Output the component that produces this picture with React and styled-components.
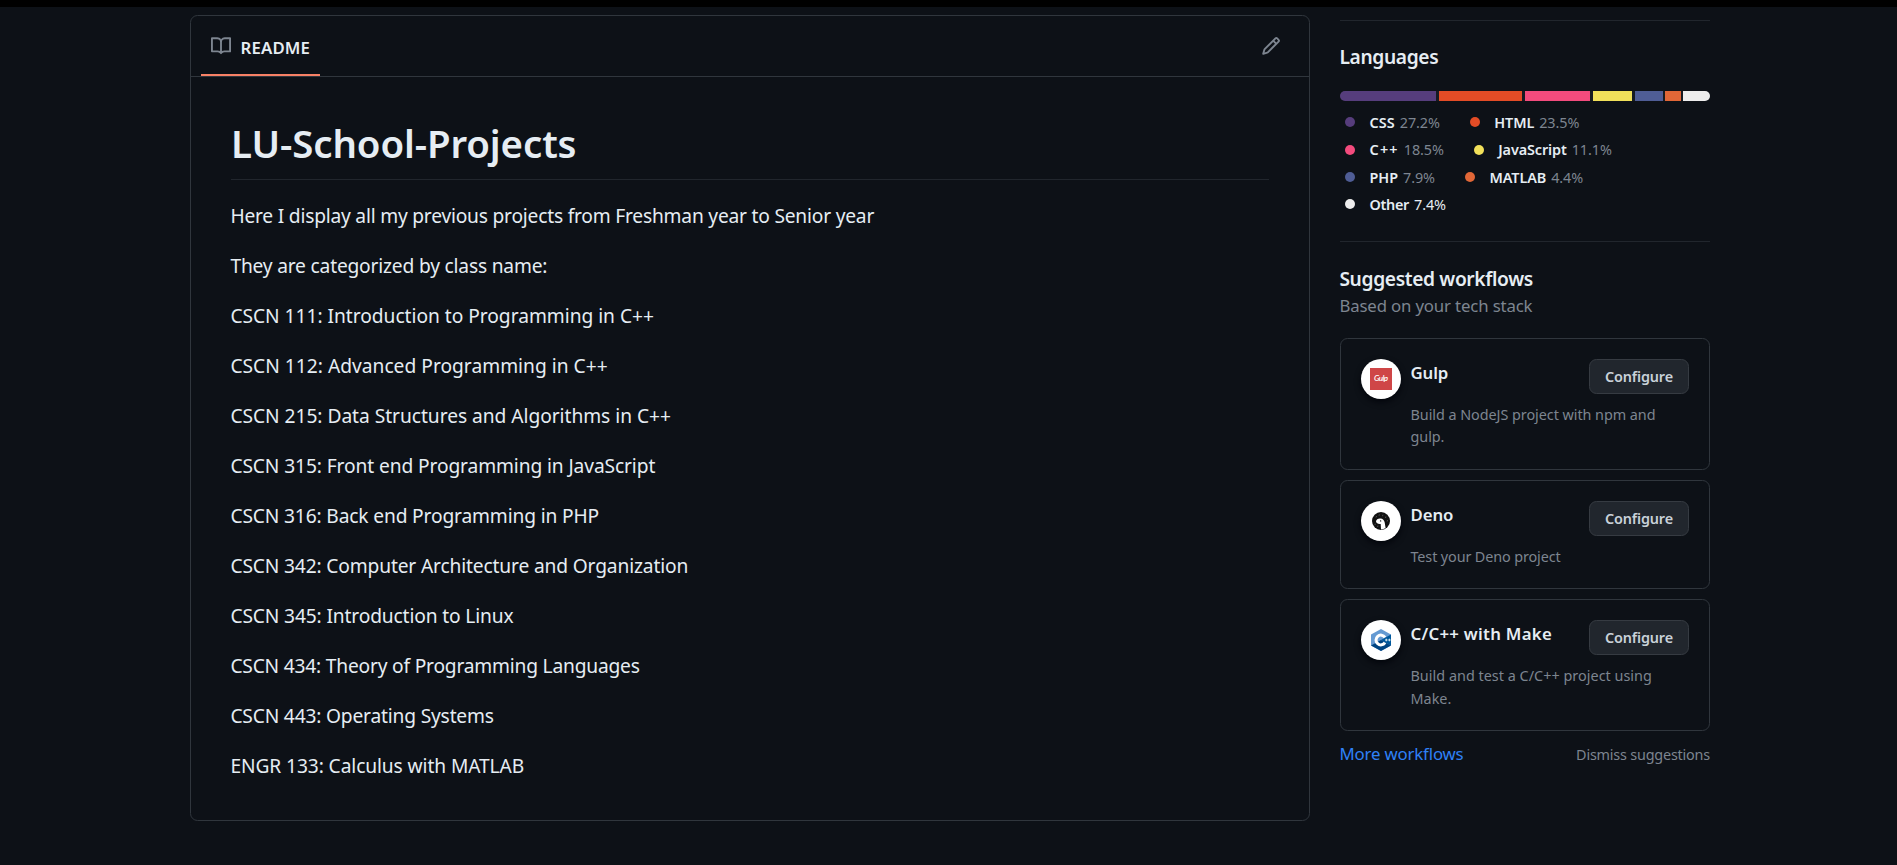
import React from "react";
import styled, { createGlobalStyle } from "styled-components";

const GlobalStyle = createGlobalStyle`
  * { box-sizing: border-box; }
  body {
    margin: 0;
    background: #0d1117;
    color: #e6edf3;
    font-family: "Noto Sans", "Open Sans", sans-serif;
    overflow: hidden;
  }
`;

const Page = styled.div`
  height: 865px;
  border-top: 7px solid #000;
  background: #0d1117;
  overflow: hidden;
`;

const Layout = styled.main`
  display: grid;
  grid-template-columns: 1120px 370px;
  column-gap: 30px;
  align-items: start;
  padding-left: 190px;
`;

const ReadmeCard = styled.section`
  margin-top: 8px;
  border: 1px solid #30363d;
  border-radius: 7.5px;
`;

const ReadmeHeader = styled.header`
  display: flex;
  justify-content: space-between;
  height: 61px;
  padding: 0 28px 0 10px;
  border-bottom: 1px solid #30363d;
`;

const Tab = styled.div`
  display: flex;
  gap: 9.5px;
  width: 119px;
  padding: 20px 0 0 10px;
  border-bottom: 2px solid #f78166;
  color: #7d8590;
`;

const TabLabel = styled.span`
  margin-top: 2px;
  font-size: 16.8px;
  line-height: 20px;
  font-weight: 600;
  letter-spacing: 0.15px;
  color: #e6edf3;
`;

const EditButton = styled.button`
  align-self: flex-start;
  display: flex;
  margin-top: 20px;
  padding: 0;
  border: 0;
  background: none;
  color: #7d8590;
`;

const ReadmeBody = styled.article`
  padding: 40px;
`;

const Title = styled.h1`
  margin: 0 0 20px;
  padding: 1px 0 11px;
  border-bottom: 1px solid #21262d;
  font-size: 38.4px;
  line-height: 50px;
  font-weight: 600;
  letter-spacing: -0.1px;
`;

const Paragraph = styled.p`
  margin: 0 0 20px;
  padding-top: 2px;
  font-size: 19.2px;
  line-height: 28px;
  text-indent: -0.6px;
  letter-spacing: ${(p) => p.$tracking}px;
  &:last-child { margin-bottom: 0; }
`;

const Sidebar = styled.aside`
  padding-top: 13px;
`;

const Panel = styled.section`
  height: ${(p) => p.$height || "auto"};
  border-top: 1px solid #21262d;
`;

const PanelTitle = styled.h2`
  margin: 0;
  padding-top: ${(p) => p.$top}px;
  font-size: 19.2px;
  line-height: 25px;
  font-weight: 600;
  text-indent: -0.6px;
  letter-spacing: -0.36px;
`;

const LanguageBar = styled.div`
  display: flex;
  height: 10px;
  margin-top: 22px;
  border-radius: 7.5px;
  overflow: hidden;
  background: #161b22;
`;

const Segment = styled.span`
  width: ${(p) => p.$width}px;
  margin-right: ${(p) => p.$gap}px;
  background: ${(p) => p.$color};
`;

const LanguageList = styled.div`
  display: grid;
  grid-auto-rows: 27.4px;
  margin-top: 10px;
`;

const LanguageRow = styled.div`
  display: flex;
  gap: 25px;
`;

const Language = styled.div`
  display: flex;
  align-items: center;
  height: 22.5px;
  font-size: 14.4px;
  white-space: nowrap;
`;

const Dot = styled.span`
  width: 10px;
  height: 10px;
  margin: 0 14.5px 0 5px;
  border-radius: 50%;
  background: ${(p) => p.$color};
`;

const LanguageName = styled.span`
  margin-right: 5px;
  font-weight: 600;
  letter-spacing: ${(p) => p.$tracking ?? -0.1}px;
`;

const Percent = styled.span`
  color: ${(p) => (p.$bright ? "#e6edf3" : "#7d8590")};
  letter-spacing: -0.1px;
`;

const Subtitle = styled.p`
  margin: 2px 0 18.6px;
  font-size: 16.8px;
  line-height: 26px;
  text-indent: -0.6px;
  letter-spacing: -0.15px;
  color: #7d8590;
`;

const Workflow = styled.div`
  display: flex;
  align-items: flex-start;
  margin-bottom: 10px;
  padding: 20px;
  border: 1px solid #30363d;
  border-radius: 7.5px;
`;

const Avatar = styled.div`
  flex: none;
  display: grid;
  place-items: center;
  width: 40px;
  height: 40px;
  margin-right: 9.5px;
  border-radius: 50%;
  background: #fff;
  box-shadow: 0 3px 6px rgba(1, 4, 9, 0.85);
`;

const WorkflowContent = styled.div`
  flex: 1;
`;

const WorkflowTop = styled.div`
  display: flex;
  justify-content: space-between;
  height: 35px;
`;

const WorkflowName = styled.h3`
  margin: 0;
  padding-top: 1px;
  font-size: 16.8px;
  line-height: 26px;
  font-weight: 600;
  letter-spacing: ${(p) => p.$tracking}px;
`;

const ConfigureButton = styled.button`
  width: 100px;
  height: 35px;
  padding: 0;
  border: 1px solid #363b42;
  border-radius: 7.5px;
  background: #21262d;
  color: #c9d1d9;
  font-family: inherit;
  font-size: 14.4px;
  font-weight: 600;
  letter-spacing: -0.15px;
`;

const Description = styled.p`
  margin: 10px 0 0;
  width: 257px;
  font-size: 14.4px;
  line-height: 22.5px;
  letter-spacing: ${(p) => p.$tracking}px;
  color: #7d8590;
`;

const Footer = styled.div`
  display: flex;
  justify-content: space-between;
  align-items: baseline;
`;

const MoreLink = styled.a`
  font-size: 16.8px;
  line-height: 26px;
  text-indent: -0.6px;
  letter-spacing: -0.15px;
  color: #2f81f7;
`;

const Dismiss = styled.span`
  font-size: 14.4px;
  letter-spacing: -0.2px;
  color: #7d8590;
`;

const BookIcon = () => (
  <svg width="20" height="20" viewBox="0 0 16 16" fill="currentColor">
    <path d="M0 1.75A.75.75 0 0 1 .75 1h4.253c1.227 0 2.317.59 3 1.501A3.743 3.743 0 0 1 11.006 1h4.245a.75.75 0 0 1 .75.75v10.5a.75.75 0 0 1-.75.75h-4.507a2.25 2.25 0 0 0-1.591.659l-.622.621a.75.75 0 0 1-1.06 0l-.622-.621A2.25 2.25 0 0 0 5.258 13H.75a.75.75 0 0 1-.75-.75Zm7.251 10.324.004-5.073-.002-2.253A2.25 2.25 0 0 0 5.003 2.5H1.5v9h3.757a3.75 3.75 0 0 1 1.994.574ZM8.755 4.75l-.004 7.322a3.752 3.752 0 0 1 1.992-.572H14.5v-9h-3.495a2.25 2.25 0 0 0-2.25 2.25Z" />
  </svg>
);

const PencilIcon = () => (
  <svg width="20" height="20" viewBox="0 0 16 16" fill="currentColor">
    <path d="M11.013 1.427a1.75 1.75 0 0 1 2.474 0l1.086 1.086a1.75 1.75 0 0 1 0 2.474l-8.61 8.61c-.21.21-.47.364-.756.445l-3.251.93a.75.75 0 0 1-.927-.928l.929-3.25c.081-.286.235-.547.445-.758l8.61-8.61Zm.176 4.823L9.75 4.81l-6.286 6.287a.253.253 0 0 0-.064.108l-.558 1.953 1.953-.558a.253.253 0 0 0 .108-.064Zm1.238-3.763a.25.25 0 0 0-.354 0L10.811 3.75l1.439 1.44 1.263-1.263a.25.25 0 0 0 0-.354Z" />
  </svg>
);

const GulpLogo = () => (
  <svg width="22" height="22" viewBox="0 0 22 22">
    <rect width="22" height="22" fill="#cf4647" />
    <text x="11" y="13.4" textAnchor="middle" textLength="14" fontFamily="Lato, sans-serif" fontStyle="italic" fontWeight="600" fontSize="8" fill="#fff">Gulp</text>
  </svg>
);

const DenoLogo = () => (
  <svg width="18" height="18" viewBox="0 0 18 18">
    <circle cx="9" cy="9" r="9" fill="#111" />
    <path d="M4 9.6C4.2 7.4 6.2 6.4 8.4 6.6c2.4.2 3.9 1.6 4.3 4l.9 5.4c-1.4.9-3 1.4-4.6 1.4L8.7 11.9C6.5 12.2 4.3 11.7 4 9.6Z" fill="#fff" />
    <circle cx="8.6" cy="8.9" r=".7" fill="#111" />
    <path d="M4 5.5l.6-1.5M7 3.8l.4-1.5M10.5 4.2l.4-1.5M13.5 6l.4-1.5M15.2 9.5l.3-1.5M3 13l.3-1.3M5.600 15l.3-1.4" stroke="#777" strokeWidth=".6" />
  </svg>
);

const CppLogo = () => (
  <svg width="20" height="22" viewBox="0 0 20 22">
    <path d="M10 0 20 5.5v11L10 22 0 16.5v-11Z" fill="#659ad2" />
    <path d="M10 11 20 5.5v11Z" fill="#00599c" />
    <path d="M0 16.5 10 11l10 5.5L10 22Z" fill="#004482" />
    <path d="M14 8.3A4.9 4.9 0 1 0 14 13.7" fill="none" stroke="#fff" strokeWidth="3" />
    <path d="M14 11h2.6M15.3 9.7v2.6M17.1 11h2.6M18.4 9.7v2.6" stroke="#fff" strokeWidth=".8" />
  </svg>
);

const paragraphs = [
  { text: "Here I display all my previous projects from Freshman year to Senior year", tracking: -0.21 },
  { text: "They are categorized by class name:", tracking: -0.19 },
  { text: "CSCN 111: Introduction to Programming in C++", tracking: -0.03 },
  { text: "CSCN 112: Advanced Programming in C++", tracking: 0.01 },
  { text: "CSCN 215: Data Structures and Algorithms in C++", tracking: -0.04 },
  { text: "CSCN 315: Front end Programming in JavaScript", tracking: -0.11 },
  { text: "CSCN 316: Back end Programming in PHP", tracking: -0.15 },
  { text: "CSCN 342: Computer Architecture and Organization", tracking: -0.15 },
  { text: "CSCN 345: Introduction to Linux", tracking: -0.14 },
  { text: "CSCN 434: Theory of Programming Languages", tracking: -0.2 },
  { text: "CSCN 443: Operating Systems", tracking: -0.18 },
  { text: "ENGR 133: Calculus with MATLAB", tracking: -0.1 },
];

const languageRows = [
  [
    { name: "CSS", percent: "27.2%", color: "#563d7c", width: 96, gap: 3, tracking: 0.1 },
    { name: "HTML", percent: "23.5%", color: "#e34c26", width: 83, gap: 3 },
  ],
  [
    { name: "C++", percent: "18.5%", color: "#f34b7d", width: 65, gap: 3, tracking: 1.2 },
    { name: "JavaScript", percent: "11.1%", color: "#f1e05a", width: 39, gap: 3 },
  ],
  [
    { name: "PHP", percent: "7.9%", color: "#4f5d95", width: 28, gap: 2, tracking: 0 },
    { name: "MATLAB", percent: "4.4%", color: "#e16737", width: 16, gap: 2 },
  ],
  [{ name: "Other", percent: "7.4%", color: "#ededed", width: 27, gap: 0, tracking: -0.3, bright: true }],
];

const workflows = [
  { name: "Gulp", Logo: GulpLogo, text: "Build a NodeJS project with npm and gulp.", tracking: -0.1, textTracking: -0.05 },
  { name: "Deno", Logo: DenoLogo, text: "Test your Deno project", tracking: -0.1, textTracking: -0.12 },
  { name: "C/C++ with Make", Logo: CppLogo, text: "Build and test a C/C++ project using Make.", tracking: 0.28, textTracking: 0.02 },
];

export default function App() {
  return (
    <Page>
      <GlobalStyle />
      <Layout>
        <ReadmeCard>
          <ReadmeHeader>
            <Tab>
              <BookIcon />
              <TabLabel>README</TabLabel>
            </Tab>
            <EditButton aria-label="Edit file">
              <PencilIcon />
            </EditButton>
          </ReadmeHeader>
          <ReadmeBody>
            <Title>LU-School-Projects</Title>
            {paragraphs.map((p) => (
              <Paragraph key={p.text} $tracking={p.tracking}>{p.text}</Paragraph>
            ))}
          </ReadmeBody>
        </ReadmeCard>
        <Sidebar>
          <Panel $height="221px">
            <PanelTitle $top={23}>Languages</PanelTitle>
            <LanguageBar>
              {languageRows.flat().map((l) => (
                <Segment key={l.name} $width={l.width} $gap={l.gap} $color={l.color} />
              ))}
            </LanguageBar>
            <LanguageList>
              {languageRows.map((row) => (
                <LanguageRow key={row[0].name}>
                  {row.map((l) => (
                    <Language key={l.name}>
                      <Dot $color={l.color} />
                      <LanguageName $tracking={l.tracking}>{l.name}</LanguageName>
                      <Percent $bright={l.bright}>{l.percent}</Percent>
                    </Language>
                  ))}
                </LanguageRow>
              ))}
            </LanguageList>
          </Panel>
          <Panel>
            <PanelTitle $top={24}>Suggested workflows</PanelTitle>
            <Subtitle>Based on your tech stack</Subtitle>
            {workflows.map(({ name, Logo, text, tracking, textTracking }) => (
              <Workflow key={name}>
                <Avatar>
                  <Logo />
                </Avatar>
                <WorkflowContent>
                  <WorkflowTop>
                    <WorkflowName $tracking={tracking}>{name}</WorkflowName>
                    <ConfigureButton>Configure</ConfigureButton>
                  </WorkflowTop>
                  <Description $tracking={textTracking}>{text}</Description>
                </WorkflowContent>
              </Workflow>
            ))}
            <Footer>
              <MoreLink>More workflows</MoreLink>
              <Dismiss>Dismiss suggestions</Dismiss>
            </Footer>
          </Panel>
        </Sidebar>
      </Layout>
    </Page>
  );
}
